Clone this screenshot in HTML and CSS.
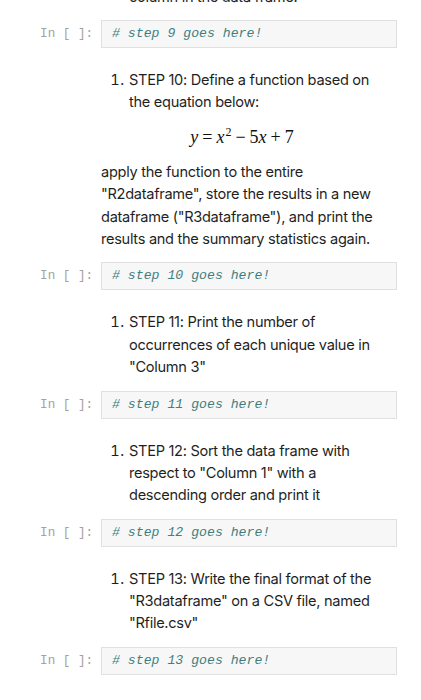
FILE: index.html
```html
<!DOCTYPE html>
<html>
<head>
<meta charset="utf-8">
<link rel="stylesheet" href="styles.css">
</head>
<body>
<div class="nb">
  <div class="md md-first">
    <p class="cont">column in the data frame.</p>
  </div>
  <div class="code">
    <div class="prompt">In [ ]:</div>
    <div class="input"># step 9 goes here!</div>
  </div>

  <div class="md">
    <ol>
      <li>STEP 10: Define a function based on the equation below:</li>
    </ol>
    <div class="eq"><i>y</i><span class="op">=</span><i>x</i><sup>2</sup><span class="op">&minus;</span>5<i>x</i><span class="op">+</span>7</div>
    <p>apply the function to the entire "R2dataframe", store the results in a new dataframe ("R3dataframe"), and print the results and the summary statistics again.</p>
  </div>
  <div class="code">
    <div class="prompt">In [ ]:</div>
    <div class="input"># step 10 goes here!</div>
  </div>

  <div class="md">
    <ol>
      <li>STEP 11: Print the number of occurrences of each unique value in "Column 3"</li>
    </ol>
  </div>
  <div class="code">
    <div class="prompt">In [ ]:</div>
    <div class="input"># step 11 goes here!</div>
  </div>

  <div class="md">
    <ol>
      <li>STEP 12: Sort the data frame with respect to "Column 1" with a descending order and print it</li>
    </ol>
  </div>
  <div class="code">
    <div class="prompt">In [ ]:</div>
    <div class="input"># step 12 goes here!</div>
  </div>

  <div class="md">
    <ol>
      <li>STEP 13: Write the final format of the "R3dataframe" on a CSV file, named "Rfile.csv"</li>
    </ol>
  </div>
  <div class="code">
    <div class="prompt">In [ ]:</div>
    <div class="input"># step 13 goes here!</div>
  </div>
</div>
</body>
</html>
```
FILE: styles.css
```css
html, body {
  margin: 0;
  padding: 0;
  background: #ffffff;
  overflow: hidden;
}
.nb {
  width: 421px;
}
.md {
  padding: 21px 38px 12.5px 101px;
  font-family: Inter, "Liberation Sans", sans-serif;
  font-size: 14.6px;
  letter-spacing: -0.3px;
  line-height: 22.2px;
  color: #1f1f1f;
}
.md-first {
  margin-top: -14px;
  padding-top: 0;
  padding-bottom: 12px;
}
.md p {
  margin: 0;
}
.md .cont {
  padding-left: 28px;
}
.md ol {
  margin: 0;
  padding-left: 28px;
}
.md li::marker {
  letter-spacing: 0.5px;
}
.eq {
  margin: 11px 0 12.5px;
  height: 24px;
  line-height: 24px;
  text-align: center;
  font-family: "Liberation Serif", serif;
  font-size: 18px;
  letter-spacing: 0;
  color: #111;
}
.eq i {
  font-style: italic;
}
.eq .op {
  margin: 0 4px;
}
.eq sup {
  font-size: 12px;
  line-height: 0;
  vertical-align: 7px;
  margin-left: 1px;
}
.code {
  display: flex;
  align-items: stretch;
  padding-right: 24px;
}
.prompt {
  width: 93px;
  padding-right: 8px;
  text-align: right;
  font-family: "Liberation Mono", monospace;
  font-size: 12.6px;
  line-height: 28px;
  color: #a3a3a3;
  flex: none;
}
.input {
  flex: 1;
  height: 26px;
  border: 1px solid #e0e0e0;
  background: #f7f7f7;
  padding-left: 10px;
  font-family: "Liberation Mono", monospace;
  font-style: italic;
  font-size: 13.2px;
  line-height: 26px;
  color: #3f7f7f;
}
```
